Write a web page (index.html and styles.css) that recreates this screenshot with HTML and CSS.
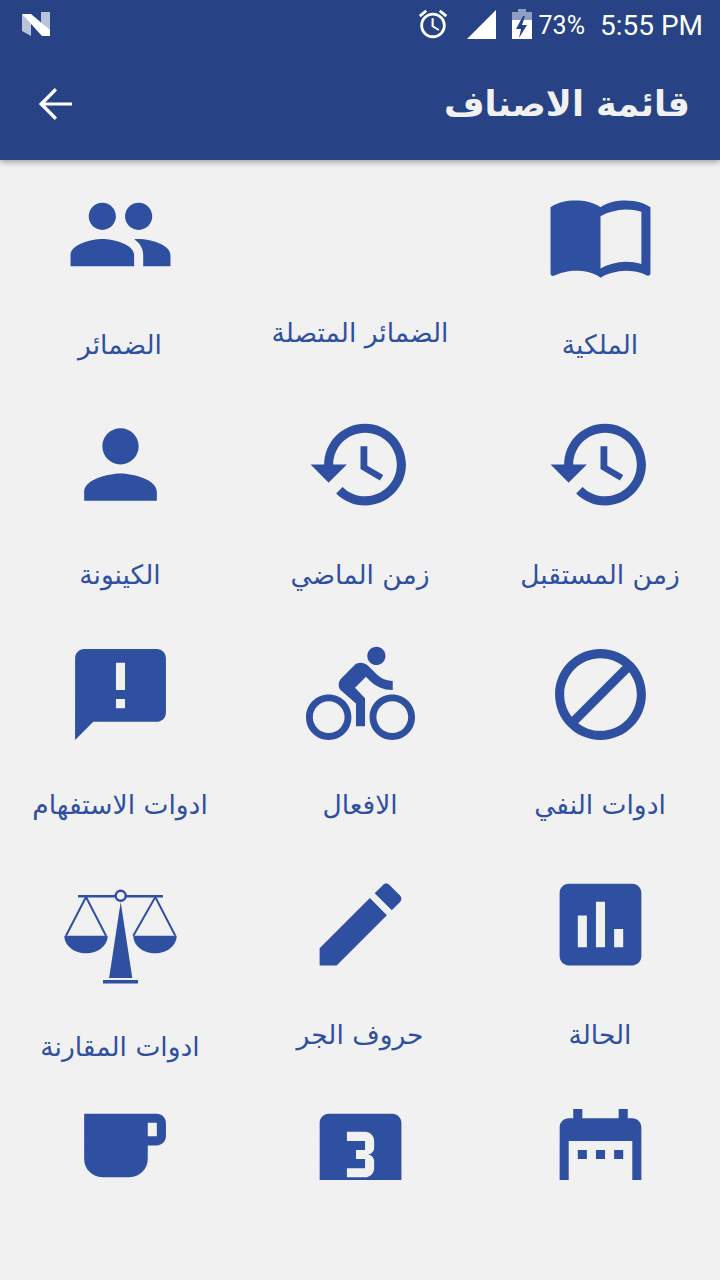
FILE: index.html
```html
<!DOCTYPE html>
<html lang="ar">
<head>
  <meta charset="UTF-8" />
  <meta name="viewport" content="width=device-width, initial-scale=1" />
  <title>قائمة الاصناف</title>
  <link rel="stylesheet" href="styles.css">
</head>
<body>
  <header class="appbar">
    <div class="statusbar">
      <svg class="logo-n" viewBox="0 0 28 24">
        <path fill="#b9c3da" d="M0 2l9 5v17l-9-5z"/>
        <path fill="#b9c3da" d="M19 0h9v22l-9-5z"/>
        <path fill="#fff" d="M0 2h9l19 16v6h-8z"/>
      </svg>
      <span class="status-right">
        <svg class="st-alarm" viewBox="0 0 24 24"><path d="M22 5.72l-4.6-3.86-1.29 1.53 4.6 3.86L22 5.72zM7.88 3.39L6.6 1.86 2 5.71l1.29 1.53 4.59-3.85zM12.5 8H11v6l4.75 2.85.75-1.23-4-2.37V8zM12 4c-4.97 0-9 4.03-9 9s4.02 9 9 9c4.97 0 9-4.03 9-9s-4.03-9-9-9zm0 16c-3.87 0-7-3.13-7-7s3.13-7 7-7 7 3.13 7 7-3.13 7-7 7z"/></svg>
        <svg class="st-signal" viewBox="0 0 29 29"><path d="M29 0v29H0z"/></svg>
        <svg class="st-battery" viewBox="0 0 20 30">
          <path fill="#8f9fc4" d="M6 0h8v3h6v10H0V3h6z"/>
          <path fill="#fff" d="M0 11h20v19H0z"/>
          <path fill="#274285" d="M11 7l-7 13h5l-2 9 8-13h-5l3-9z"/>
        </svg>
        <span class="st-percent">73%</span>
        <span class="st-time">5:55 PM</span>
      </span>
    </div>
    <div class="toolbar">
      <svg class="back" viewBox="0 0 24 24"><path d="M20 11.2H6.6l5.9-5.9L11.4 4l-8 8 8 8 1.1-1.3-5.9-5.9H20z"/></svg>
      <h1>قائمة الاصناف</h1>
    </div>
  </header>

  <main class="grid">
    <div class="item">
      <div class="pic"><svg viewBox="0 0 24 24"><path d="M21 5c-1.11-.35-2.33-.5-3.5-.5-1.95 0-4.05.4-5.5 1.5-1.45-1.1-3.55-1.5-5.5-1.5S2.45 4.9 1 6v14.65c0 .25.25.5.5.5.1 0 .15-.05.25-.05C3.1 20.45 5.05 20 6.5 20c1.95 0 4.05.4 5.5 1.5 1.35-.85 3.8-1.5 5.5-1.5 1.65 0 3.35.3 4.75 1.05.1.05.15.05.25.05.25 0 .5-.25.5-.5V6c-.6-.45-1.25-.75-2-1zm0 13.5c-1.1-.35-2.3-.5-3.5-.5-1.7 0-4.15.65-5.5 1.5V8c1.35-.85 3.8-1.5 5.5-1.5 1.2 0 2.4.15 3.5.5v11.5z"/></svg></div>
      <p>الملكية</p>
    </div>
    <div class="item">
      <div class="pic short"></div>
      <p>الضمائر المتصلة</p>
    </div>
    <div class="item">
      <div class="pic"><svg viewBox="0 0 24 24"><path d="M16 11c1.66 0 2.99-1.34 2.99-3S17.66 5 16 5c-1.66 0-3 1.34-3 3s1.34 3 3 3zm-8 0c1.66 0 2.99-1.34 2.99-3S9.66 5 8 5C6.34 5 5 6.34 5 8s1.34 3 3 3zm0 2c-2.33 0-7 1.17-7 3.5V19h14v-2.5c0-2.33-4.67-3.5-7-3.5zm8 0c-.29 0-.62.02-.97.05 1.16.84 1.97 1.97 1.97 3.45V19h6v-2.5c0-2.33-4.67-3.5-7-3.5z"/></svg></div>
      <p>الضمائر</p>
    </div>

    <div class="item">
      <div class="pic"><svg viewBox="0 0 24 24"><path d="M13 3c-4.97 0-9 4.03-9 9H1l3.89 3.89.07.14L9 12H6c0-3.87 3.13-7 7-7s7 3.13 7 7-3.13 7-7 7c-1.93 0-3.68-.79-4.94-2.06l-1.42 1.42C8.27 19.99 10.51 21 13 21c4.97 0 9-4.03 9-9s-4.03-9-9-9zm-1 5v5l4.28 2.54.72-1.21-3.5-2.08V8H12z"/></svg></div>
      <p>زمن المستقبل</p>
    </div>
    <div class="item">
      <div class="pic"><svg viewBox="0 0 24 24"><path d="M13 3c-4.97 0-9 4.03-9 9H1l3.89 3.89.07.14L9 12H6c0-3.87 3.13-7 7-7s7 3.13 7 7-3.13 7-7 7c-1.93 0-3.68-.79-4.94-2.06l-1.42 1.42C8.27 19.99 10.51 21 13 21c4.97 0 9-4.03 9-9s-4.03-9-9-9zm-1 5v5l4.28 2.54.72-1.21-3.5-2.08V8H12z"/></svg></div>
      <p>زمن الماضي</p>
    </div>
    <div class="item">
      <div class="pic"><svg viewBox="0 0 24 24"><path d="M12 12c2.21 0 4-1.79 4-4s-1.79-4-4-4-4 1.79-4 4 1.79 4 4 4zm0 2c-2.67 0-8 1.34-8 4v2h16v-2c0-2.66-5.33-4-8-4z"/></svg></div>
      <p>الكينونة</p>
    </div>

    <div class="item">
      <div class="pic"><svg viewBox="0 0 24 24"><path d="M12 2C6.48 2 2 6.48 2 12s4.48 10 10 10 10-4.48 10-10S17.52 2 12 2zM4 12c0-4.42 3.58-8 8-8 1.85 0 3.55.63 4.9 1.69L5.69 16.9C4.63 15.55 4 13.85 4 12zm8 8c-1.85 0-3.55-.63-4.9-1.69L18.31 7.1C19.37 8.45 20 10.15 20 12c0 4.42-3.58 8-8 8z"/></svg></div>
      <p>ادوات النفي</p>
    </div>
    <div class="item">
      <div class="pic"><svg viewBox="0 0 24 24"><path d="M15.5 5.5c1.1 0 2-.9 2-2s-.9-2-2-2-2 .9-2 2 .9 2 2 2zM5 12c-2.8 0-5 2.2-5 5s2.2 5 5 5 5-2.2 5-5-2.2-5-5-5zm0 8.5c-1.9 0-3.5-1.6-3.5-3.5s1.6-3.5 3.5-3.5 3.5 1.6 3.5 3.5-1.6 3.5-3.5 3.5zm5.8-10l2.4-2.4.8.8c1.3 1.3 3 2.1 5.1 2.1V9c-1.5 0-2.7-.6-3.6-1.5l-1.9-1.9c-.5-.4-1-.6-1.6-.6s-1.1.2-1.4.6L7.8 8.4c-.4.4-.6.9-.6 1.4 0 .6.2 1.1.6 1.4L11 14v5h2v-6.2l-2.2-2.3zM19 12c-2.8 0-5 2.2-5 5s2.2 5 5 5 5-2.2 5-5-2.2-5-5-5zm0 8.5c-1.9 0-3.5-1.6-3.5-3.5s1.6-3.5 3.5-3.5 3.5 1.6 3.5 3.5-1.6 3.5-3.5 3.5z"/></svg></div>
      <p>الافعال</p>
    </div>
    <div class="item">
      <div class="pic"><svg viewBox="0 0 24 24"><path d="M20 2H4c-1.1 0-1.99.9-1.99 2L2 22l4-4h14c1.1 0 2-.9 2-2V4c0-1.1-.9-2-2-2zm-7 13h-2v-2h2v2zm0-4h-2V5h2v6z"/></svg></div>
      <p>ادوات الاستفهام</p>
    </div>

    <div class="item">
      <div class="pic"><svg viewBox="0 0 24 24"><path d="M19 3H5c-1.1 0-2 .9-2 2v14c0 1.1.9 2 2 2h14c1.1 0 2-.9 2-2V5c0-1.1-.9-2-2-2zM9 17H7v-7h2v7zm4 0h-2V7h2v10zm4 0h-2v-4h2v4z"/></svg></div>
      <p>الحالة</p>
    </div>
    <div class="item">
      <div class="pic"><svg viewBox="0 0 24 24"><path d="M3 17.25V21h3.75L17.81 9.94l-3.75-3.75L3 17.25zM20.71 7.04c.39-.39.39-1.02 0-1.41l-2.34-2.34c-.39-.39-1.02-.39-1.41 0l-1.83 1.83 3.75 3.75 1.83-1.83z"/></svg></div>
      <p>حروف الجر</p>
    </div>
    <div class="item">
      <div class="pic tall">
        <svg class="scales" viewBox="0 0 120 122">
          <path d="M18 25h85v2.4H18z"/>
          <circle cx="60.7" cy="25.8" r="5" fill="#f1f1f1" stroke="#2f50a0" stroke-width="2.4"/>
          <path d="M60.7 32l11.6 76H49.1z"/>
          <path d="M43 110h35v3.6H43z"/>
          <path class="cord" d="M6 65.7L26 27l20 38.7M73.3 65.7L95.3 27l20 38.7"/>
          <path d="M4.3 65.7h43.4c0 10-10 17.6-21.7 17.6S4.3 75.7 4.3 65.7z"/>
          <path d="M73.3 65.7h43.4c0 10-10 17.6-21.7 17.6s-21.7-7.6-21.7-17.6z"/>
        </svg>
      </div>
      <p>ادوات المقارنة</p>
    </div>

    <div class="item">
      <div class="pic"><svg viewBox="0 0 24 24"><path d="M9 11H7v2h2v-2zm4 0h-2v2h2v-2zm4 0h-2v2h2v-2zm2-7h-1V2h-2v2H8V2H6v2H5c-1.11 0-1.99.9-1.99 2L3 20c0 1.1.89 2 2 2h14c1.1 0 2-.9 2-2V6c0-1.1-.9-2-2-2zm0 16H5V9h14v11z"/></svg></div>
    </div>
    <div class="item">
      <div class="pic"><svg viewBox="0 0 24 24"><path d="M19.01 3h-14c-1.1 0-2 .9-2 2v14c0 1.1.9 2 2 2h14c1.1 0 2-.9 2-2V5c0-1.1-.9-2-2-2zm-4 7.5c0 .83-.67 1.5-1.5 1.5.83 0 1.5.67 1.5 1.5V15c0 1.11-.9 2-2 2h-4v-2h4v-2h-2v-2h2V9h-4V7h4c1.1 0 2 .89 2 2v1.5z"/></svg></div>
    </div>
    <div class="item">
      <div class="pic"><svg viewBox="0 0 24 24"><path d="M20 3H4v10c0 2.21 1.79 4 4 4h6c2.21 0 4-1.79 4-4v-3h2c1.11 0 2-.9 2-2V5c0-1.11-.89-2-2-2zm0 5h-2V5h2v3z"/></svg></div>
    </div>
  </main>
</body>
</html>
```

FILE: styles.css
```css
body {
  margin: 0;
  height: 1280px;
  overflow: hidden;
  background: #f1f1f1;
  font-family: "DejaVu Sans", sans-serif;
  color: #2f50a0;
}
.appbar {
  position: relative;
  z-index: 1;
  height: 160px;
  background: #274285;
  box-shadow: 0 2px 6px rgba(0, 0, 0, 0.35);
}
.statusbar {
  height: 48px;
  display: flex;
  align-items: center;
  justify-content: space-between;
  padding: 0 17px 0 22px;
  color: #fff;
  font-family: Roboto, sans-serif;
}
.logo-n {
  width: 28px;
  height: 24px;
}
.status-right {
  display: flex;
  align-items: center;
}
.status-right svg {
  fill: #fff;
}
.st-alarm {
  width: 34px;
  height: 34px;
  margin-right: 17px;
}
.st-signal {
  width: 29px;
  height: 29px;
  margin-right: 16px;
}
.st-battery {
  width: 20px;
  height: 30px;
  margin-right: 7px;
}
.st-percent {
  font-size: 25px;
  margin-right: 15px;
  padding-top: 2px;
}
.st-time {
  font-size: 28px;
  padding-top: 3px;
}
.toolbar {
  height: 112px;
  display: flex;
  align-items: center;
  justify-content: space-between;
  padding: 0 30px 0 32px;
}
.back {
  width: 48px;
  height: 48px;
  fill: #fff;
}
h1 {
  margin: 0;
  font-size: 35px;
  font-weight: 700;
  color: #f1f1f1;
}
.grid {
  direction: rtl;
  height: 1000px;
  padding-top: 20px;
  overflow: hidden;
  display: grid;
  grid-template-columns: repeat(3, 240px);
  grid-auto-rows: 230px;
}
.item {
  display: flex;
  flex-direction: column;
  align-items: center;
}
.pic {
  width: 110px;
  height: 110px;
  display: flex;
  justify-content: center;
}
.pic svg {
  width: 109px;
  height: 109px;
  flex: none;
  margin-left: 1px;
  fill: #2f50a0;
}
.pic.short {
  height: 98px;
}
.pic.tall {
  height: 122px;
}
.pic svg.scales {
  width: 120px;
  height: 122px;
  margin-left: 0;
}
.cord {
  fill: none;
  stroke: #2f50a0;
  stroke-width: 2;
}
.item p {
  margin: 36px 0 0;
  font-size: 26.5px;
  line-height: 38px;
  white-space: nowrap;
}
```
